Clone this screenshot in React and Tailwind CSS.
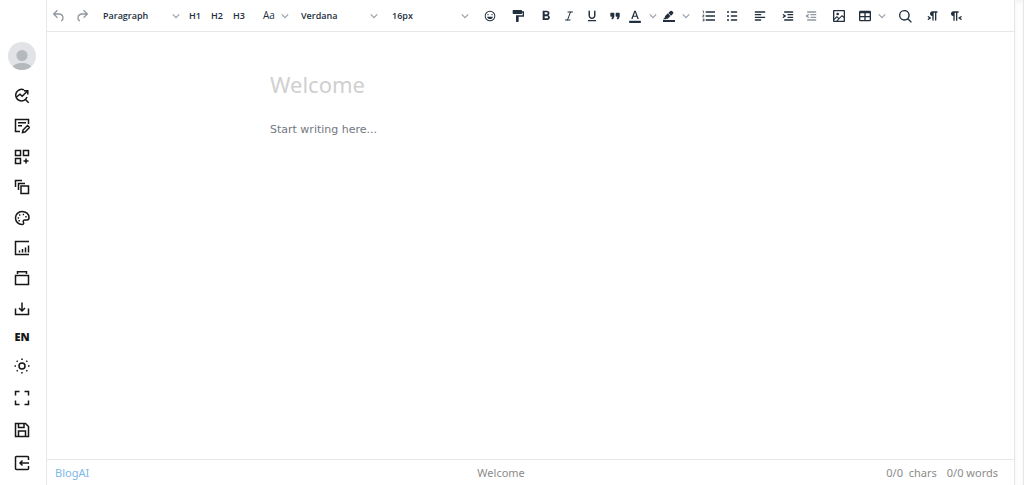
import React, { useState } from 'react';
import { Italic } from 'lucide-react';
import {
    MdFormatBold,
    MdFormatUnderlined,
    MdFormatColorText,
    MdFormatListNumbered,
} from 'react-icons/md';

const PATHS = {
    undo: 'M6.4 8H12c3.7 0 6.2 2 6.8 5.1.6 2.7-.4 5.6-2.3 6.8a1 1 0 0 1-1-1.8c1.1-.6 1.8-2.7 1.4-4.6-.5-2.1-2.1-3.5-4.9-3.5H6.4l3.3 3.3a1 1 0 1 1-1.4 1.4l-5-5a1 1 0 0 1 0-1.4l5-5a1 1 0 0 1 1.4 1.4L6.4 8Z',
    redo: 'M17.6 10H12c-2.8 0-4.4 1.4-4.9 3.5-.4 2 .3 4 1.4 4.6a1 1 0 1 1-1 1.8c-2-1.2-2.9-4.1-2.3-6.8.6-3 3-5.1 6.8-5.1h5.6l-3.3-3.3a1 1 0 1 1 1.4-1.4l5 5a1 1 0 0 1 0 1.4l-5 5a1 1 0 0 1-1.4-1.4l3.3-3.3Z',
    emoji: 'M9 11c.6 0 1-.4 1-1s-.4-1-1-1a1 1 0 0 0-1 1c0 .6.4 1 1 1Zm6 0c.6 0 1-.4 1-1s-.4-1-1-1a1 1 0 0 0-1 1c0 .6.4 1 1 1Zm-3 5.5c2.1 0 4-1.5 4.4-3.5H7.6c.5 2 2.3 3.5 4.4 3.5ZM12 4a8 8 0 1 0 0 16 8 8 0 0 0 0-16Zm0 14.5a6.5 6.5 0 1 1 0-13 6.5 6.5 0 0 1 0 13Z',
    painter: 'M18 5V4c0-.5-.4-1-1-1H5a1 1 0 0 0-1 1v4c0 .6.5 1 1 1h12c.6 0 1-.4 1-1V7h1v4H9v9c0 .6.4 1 1 1h2c.6 0 1-.4 1-1v-7h8V5h-3Z',
    quote: 'M7.5 17h.9c.4 0 .7-.2.9-.6L11 13V8c0-.6-.4-1-1-1H6a1 1 0 0 0-1 1v4c0 .6.4 1 1 1h2l-1.3 2.7a1 1 0 0 0 .8 1.3Zm8 0h.9c.4 0 .7-.2.9-.6L19 13V8c0-.6-.4-1-1-1h-4a1 1 0 0 0-1 1v4c0 .6.4 1 1 1h2l-1.3 2.7a1 1 0 0 0 .8 1.3Z',
    highlight: 'M3 18h18v3H3zM7.7 16.7H3l3.3-3.3-.7-.8L10.2 8l4 4.1-4 4.2c-.2.2-.6.2-.8 0l-.6-.7-1.1 1.1zM11 7.4l3-2.9a2 2 0 0 1 2.6 0L18 6c.7.7.7 2 0 2.7l-2.900 2.900Z',
    bullets: 'M11 5h8a1 1 0 0 1 0 2h-8a1 1 0 0 1 0-2Zm0 6h8a1 1 0 0 1 0 2h-8a1 1 0 0 1 0-2Zm0 6h8a1 1 0 0 1 0 2h-8a1 1 0 0 1 0-2ZM6 4.5a1.5 1.5 0 1 1 0 3 1.5 1.5 0 0 1 0-3Zm0 6a1.5 1.5 0 1 1 0 3 1.5 1.5 0 0 1 0-3Zm0 6a1.5 1.5 0 1 1 0 3 1.5 1.5 0 0 1 0-3Z',
    alignLeft: 'M5 5h14a1 1 0 0 1 0 2H5a1 1 0 1 1 0-2Zm0 4h8a1 1 0 0 1 0 2H5a1 1 0 1 1 0-2Zm0 8h8a1 1 0 0 1 0 2H5a1 1 0 0 1 0-2Zm0-4h14a1 1 0 0 1 0 2H5a1 1 0 0 1 0-2Z',
    indent: 'M7 5h12a1 1 0 0 1 0 2H7a1 1 0 1 1 0-2Zm5 4h7a1 1 0 0 1 0 2h-7a1 1 0 0 1 0-2Zm0 4h7a1 1 0 0 1 0 2h-7a1 1 0 0 1 0-2Zm-5 4h12a1 1 0 0 1 0 2H7a1 1 0 0 1 0-2Zm-2.6-3.8L6.2 12l-1.8-1.2a1 1 0 0 1 1.2-1.6l3 2a1 1 0 0 1 0 1.6l-3 2a1 1 0 1 1-1.2-1.6Z',
    outdent: 'M7 5h12a1 1 0 0 1 0 2H7a1 1 0 1 1 0-2Zm5 4h7a1 1 0 0 1 0 2h-7a1 1 0 0 1 0-2Zm0 4h7a1 1 0 0 1 0 2h-7a1 1 0 0 1 0-2Zm-5 4h12a1 1 0 0 1 0 2H7a1 1 0 0 1 0-2Zm1.6-3.8a1 1 0 0 1-1.2 1.6l-3-2a1 1 0 0 1 0-1.6l3-2a1 1 0 0 1 1.2 1.6L6.8 12l1.8 1.2Z',
    image: 'm5 15.7 3.3-3.2c.3-.3.7-.3 1 0L12 15l4.1-4c.3-.4.8-.4 1 0l2 1.9V5H5v10.7ZM5 18V19h3l2.8-2.9-2-2L5 17.9Zm14-3-2.5-2.4-6.4 6.5H19v-4ZM4 3h16c.6 0 1 .4 1 1v16c0 .6-.4 1-1 1H4a1 1 0 0 1-1-1V4c0-.6.4-1 1-1Zm6 8a2 2 0 1 0 0-4 2 2 0 0 0 0 4Z',
    table: 'M19 4a2 2 0 0 1 2 2v12a2 2 0 0 1-2 2H5a2 2 0 0 1-2-2V6c0-1.1.9-2 2-2h14ZM5 14v4h6v-4H5Zm14 0h-6v4h6v-4Zm0-6h-6v4h6V8ZM5 12h6V8H5v4Z',
    search: 'M16 17.3a8 8 0 1 1 1.4-1.4l4.3 4.4a1 1 0 0 1-1.4 1.4l-4.4-4.3Zm-5-.3a6 6 0 1 0 0-12 6 6 0 0 0 0 12Z',
    ltr: 'M11 5h7a1 1 0 0 1 0 2h-1v11a1 1 0 0 1-2 0V7h-2v11a1 1 0 0 1-2 0v-6c-.5 0-1 0-1.4-.3A3.4 3.4 0 0 1 7.8 10a3.3 3.3 0 0 1 0-2.8 3.4 3.4 0 0 1 1.8-1.8L11 5ZM4.4 16.2 6.2 15l-1.8-1.2a1 1 0 0 1 1.2-1.6l3 2a1 1 0 0 1 0 1.6l-3 2a1 1 0 1 1-1.2-1.6Z',
    rtl: 'M8 5h8v2h-2v12h-2V7h-2v12H8v-7c-.5 0-1 0-1.4-.3A3.4 3.4 0 0 1 4.8 10a3.3 3.3 0 0 1 0-2.8 3.4 3.4 0 0 1 1.8-1.8L8 5Zm12.2 11.2a1 1 0 1 1-1.2 1.6l-3-2a1 1 0 0 1 0-1.6l3-2a1 1 0 1 1 1.2 1.6L18.4 15l1.8 1.2Z',
};

const Icon = ({ name }) => (
    <svg viewBox="0 0 24 24" className="size-4 shrink-0" fill="currentColor" fillRule="evenodd" aria-hidden="true">
        <path d={PATHS[name]} />
    </svg>
);

const Chevron = () => (
    <svg viewBox="0 0 10 10" className="size-2 shrink-0 text-gray-400" fill="none" stroke="currentColor" strokeWidth="1.5" aria-hidden="true">
        <path d="m1 3 4 4 4-4" />
    </svg>
);

const Group = ({ children }) => <div className="flex shrink-0 items-center">{children}</div>;

const ToolButton = ({ label, children, disabled }) => (
    <button
        type="button"
        aria-label={label}
        disabled={disabled}
        className="flex h-6 w-[23px] items-center justify-center rounded-sm hover:bg-gray-100 disabled:text-[#222f3e]/50"
    >
        {children}
    </button>
);

const SplitButton = ({ label, children }) => (
    <button
        type="button"
        aria-label={label}
        className="flex h-6 w-[33px] items-center justify-between rounded-sm px-0.5 hover:bg-gray-100"
    >
        {children}
        <Chevron />
    </button>
);

const ToolSelect = ({ label, options }) => (
    <div className="relative flex w-[86px] items-center">
        <select
            aria-label={label}
            className="h-6 w-full appearance-none bg-transparent pl-[5px] text-[9px] font-semibold outline-none"
        >
            {options.map((o) => (
                <option key={o}>{o}</option>
            ))}
        </select>
        <span className="pointer-events-none absolute right-1">
            <Chevron />
        </span>
    </div>
);

const Toolbar = () => (
    <div
        role="toolbar"
        aria-label="Formatting"
        className="flex h-8 shrink-0 items-center gap-[5px] overflow-hidden border-b border-gray-200 font-['Open_Sans',sans-serif] text-[9px] font-semibold text-[#222f3e]"
    >
        <Group>
            <ToolButton label="Undo" disabled><Icon name="undo" /></ToolButton>
            <ToolButton label="Redo" disabled><Icon name="redo" /></ToolButton>
        </Group>
        <Group>
            <ToolSelect label="Block format" options={['Paragraph', 'Heading 1', 'Heading 2']} />
            {['H1', 'H2', 'H3'].map((h) => (
                <button key={h} type="button" className="h-6 w-[22px] rounded-sm hover:bg-gray-100">{h}</button>
            ))}
        </Group>
        <Group>
            <button type="button" aria-label="Aa, change case" className="flex h-6 w-9 items-center justify-between rounded-sm pr-0.5 pl-2 text-[10px] font-medium hover:bg-gray-100">
                Aa
                <Chevron />
            </button>
        </Group>
        <Group>
            <ToolSelect label="Font family" options={['Verdana', 'Arial', 'Georgia']} />
        </Group>
        <Group>
            <ToolSelect label="Font size" options={['16px', '18px', '24px']} />
        </Group>
        <Group>
            <ToolButton label="Emojis"><Icon name="emoji" /></ToolButton>
        </Group>
        <Group>
            <ToolButton label="Format painter"><Icon name="painter" /></ToolButton>
        </Group>
        <Group>
            <ToolButton label="Bold"><MdFormatBold className="size-4" /></ToolButton>
            <ToolButton label="Italic"><Italic className="size-3" strokeWidth={2} /></ToolButton>
            <ToolButton label="Underline"><MdFormatUnderlined className="size-3.5" /></ToolButton>
            <ToolButton label="Blockquote"><Icon name="quote" /></ToolButton>
            <SplitButton label="Text color"><MdFormatColorText className="size-3.5" /></SplitButton>
            <SplitButton label="Highlight color"><Icon name="highlight" /></SplitButton>
        </Group>
        <Group>
            <ToolButton label="Numbered list"><MdFormatListNumbered className="size-4" /></ToolButton>
            <ToolButton label="Bullet list"><Icon name="bullets" /></ToolButton>
        </Group>
        <Group>
            <ToolButton label="Align left"><Icon name="alignLeft" /></ToolButton>
        </Group>
        <Group>
            <ToolButton label="Increase indent"><Icon name="indent" /></ToolButton>
            <ToolButton label="Decrease indent" disabled><Icon name="outdent" /></ToolButton>
        </Group>
        <Group>
            <ToolButton label="Insert image"><Icon name="image" /></ToolButton>
        </Group>
        <Group>
            <SplitButton label="Table"><Icon name="table" /></SplitButton>
        </Group>
        <Group>
            <ToolButton label="Find"><Icon name="search" /></ToolButton>
        </Group>
        <Group>
            <ToolButton label="Left to right"><Icon name="ltr" /></ToolButton>
            <ToolButton label="Right to left"><Icon name="rtl" /></ToolButton>
        </Group>
    </div>
);

// Sidebar icons, all drawn on a 16x16 grid
const SIDE_ITEMS = [
    {
        label: 'Search insights',
        icon: (
            <>
                <path d="M10 1.9a5.8 5.8 0 1 0 3 7.100M10.900 11l3.800 3.800" />
                <path d="M2.500 9 6 6.200l2.200 2L13 3.500M10 2.800h3.800v3.800" />
            </>
        ),
    },
    {
        label: 'Edit post',
        icon: (
            <>
                <path d="M6 13.500H1.500v-12h13V6M4 4.800h8M4 7.800h4" />
                <path d="m8.500 14.500.5-2.500 4.500-4.500 2 2L11 14Z" />
            </>
        ),
    },
    {
        label: 'Widgets',
        icon: <path d="M1.500 1.500h5v5h-5ZM9.500 1.500h5v5h-5ZM1.500 9.500h5v5h-5ZM12 9.500v5M9.500 12h5" />,
    },
    {
        label: 'Templates',
        icon: <path d="M7 7h7.500v7.500H7ZM4.500 11V4.500H11M1.500 8V1.500H8" />,
    },
    {
        label: 'Theme',
        icon: (
            <>
                <path d="M8 1.500a6.500 6.500 0 0 0 0 13c1.500 0 2-1 1.500-2-.8-1.500 0-2.500 1.500-2.500h2c1 0 2-.8 2-2.500 0-3.500-3-6-7-6Z" />
                <path d="M3.700 8h1.400M5 5h1.400M8.700 4.500h1.400M11.300 6.800h1.400M4.500 10.700h1.400" />
            </>
        ),
    },
    {
        label: 'Analytics',
        icon: <path d="M15 1.500H1.500v13H15M5.500 12.500v-2M8.500 12.500V9M11.500 12.500V7.500M14.500 12.500v-7" />,
    },
    { label: 'Collections', icon: <path d="M1.500 5.500h13v9h-13ZM3.500 4V1.800h9V4" /> },
    { label: 'Download', icon: <path d="M1.500 7.500v6h13v-6M8 1.500v8M5 7l3 3 3-3" /> },
    { label: 'Language', text: 'EN', size: 'h-5' },
    {
        label: 'Light mode',
        icon: (
            <>
                <circle cx="8" cy="8" r="3" />
                <path d="M8 .5V2M8 14v1.500M.5 8H2M14 8h1.500M2.700 2.700l1 1M12.300 12.300l1 1M13.300 2.700l-1 1M3.700 12.300l-1 1" />
            </>
        ),
    },
    { label: 'Full screen', size: 'h-7', icon: <path d="M1.500 5.500v-4h4M10.500 1.500h4v4M14.500 10.500v4h-4M5.500 14.500h-4v-4" /> },
    {
        label: 'Save',
        icon: <path d="M1.500 1.500h10l3 3v10h-13ZM4.500 14v-5h7v5M4.500 2v3.500H10V2" />,
    },
    {
        label: 'Exit',
        size: 'h-7',
        icon: <path d="M14.500 5V2.500a1 1 0 0 0-1-1h-11a1 1 0 0 0-1 1v11a1 1 0 0 0 1 1h11a1 1 0 0 0 1-1V11M15 8H6M8.500 5.500 6 8l2.500 2.500" />,
    },
];

const Sidebar = () => (
    <nav aria-label="Tools" className="flex w-[47px] shrink-0 flex-col items-center border-r border-gray-200 pt-[42px] pr-0.5 pb-2">
        <button type="button" aria-label="Account" className="size-7 shrink-0 overflow-hidden rounded-full bg-[#e1e3e6]">
            <svg viewBox="0 0 28 28" fill="#b3b9bd" aria-hidden="true">
                <circle cx="14" cy="13.500" r="5.500" />
                <path d="M4 28c0-5 4-7 10-7s10 2 10 7Z" />
            </svg>
        </button>
        <ul className="mt-3.5 flex flex-1 flex-col items-center justify-between">
            {SIDE_ITEMS.map((item) => (
                <li key={item.label} className={`flex ${item.size || 'h-6'}`}>
                    <button
                        type="button"
                        aria-label={item.text || item.label}
                        className="flex w-8 items-center justify-center text-neutral-900"
                    >
                        {item.text ? (
                            <span className="font-['Open_Sans',sans-serif] text-[11px] font-extrabold">{item.text}</span>
                        ) : (
                            <svg viewBox="0 0 16 16" className="size-4" fill="none" stroke="currentColor" strokeWidth="1.5" aria-hidden="true">
                                {item.icon}
                            </svg>
                        )}
                    </button>
                </li>
            ))}
        </ul>
    </nav>
);

const App = () => {
    const [title, setTitle] = useState('');
    const [body, setBody] = useState('');

    return (
        <div className="flex h-screen bg-white font-['Noto_Sans',Verdana,sans-serif]">
            <Sidebar />

            <div className="flex min-w-0 flex-1 flex-col">
                <Toolbar />

                {/* Editor */}
                <main className="flex min-h-0 flex-1 flex-col px-[223px] pt-9">
                    <input
                        aria-label="Title"
                        value={title}
                        onChange={(e) => setTitle(e.target.value)}
                        placeholder="Welcome"
                        className="h-8 w-full text-[22px] text-gray-700 outline-none placeholder:text-[#d0d0d0]"
                    />
                    <textarea
                        aria-label="Content"
                        value={body}
                        onChange={(e) => setBody(e.target.value)}
                        placeholder="Start writing here..."
                        className="mt-5 w-full flex-1 resize-none font-['DejaVu_Sans',Verdana,sans-serif] text-[11px] leading-5 text-gray-700 outline-none placeholder:text-[#717780]"
                    />
                </main>

                {/* Status bar */}
                <footer className="grid h-[26px] shrink-0 grid-cols-3 items-center border-t border-gray-200 pt-px pr-4 pl-2 text-[11px] text-[#8b8b8b]">
                    <a href="#" className="text-[#7db8e8]">BlogAI</a>
                    <span className="pl-[108px]">Welcome</span>
                    <div className="flex justify-end gap-2.5">
                        <span className="whitespace-pre">0/0  chars</span>
                        <span>0/0 words</span>
                    </div>
                </footer>
            </div>

            {/* Right gutter */}
            <div className="w-2.5 shrink-0 border-x border-gray-200 bg-white shadow-inner" />
        </div>
    );
};

export default App;
